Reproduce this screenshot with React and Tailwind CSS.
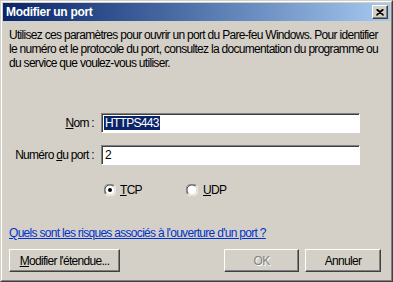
import React from 'react';

const font = { fontFamily: '"Liberation Sans", Arial, sans-serif' };

function Button({ children, disabled, className = '' }) {
  return (
    <div
      className={`h-[23px] flex items-center justify-center bg-[#d4d0c8] border border-t-white border-l-white border-r-[#404040] border-b-[#404040] shadow-[inset_-1px_-1px_0_#808080] ${
        disabled ? 'text-[#808080] [text-shadow:1px_1px_0_#fff]' : 'text-black'
      } ${className}`}
    >
      {children}
    </div>
  );
}

function Radio({ checked }) {
  return (
    <svg width="12" height="12" viewBox="0 0 12 12" className="shrink-0">
      <circle cx="6" cy="6" r="5.5" fill="#fff" />
      <path d="M1.6 10.4 A5.5 5.5 0 0 1 10.4 1.6" fill="none" stroke="#808080" strokeWidth="1" />
      <path d="M2.4 9.6 A4.4 4.4 0 0 1 9.6 2.4" fill="none" stroke="#404040" strokeWidth="1" />
      <path d="M10.4 1.6 A5.5 5.5 0 0 1 1.6 10.4" fill="none" stroke="#ffffff" strokeWidth="1" />
      <path d="M9.6 2.4 A4.4 4.4 0 0 1 2.4 9.6" fill="none" stroke="#d4d0c8" strokeWidth="1" />
      {checked && <circle cx="6" cy="6" r="2" fill="#000" />}
    </svg>
  );
}

export default function App() {
  return (
    <div style={font} className="w-[393px] h-[282px] bg-[#d4d0c8] border border-t-[#d4d0c8] border-l-[#d4d0c8] border-r-[#404040] border-b-[#404040]">
      <div className="h-full border border-t-white border-l-white border-r-[#808080] border-b-[#808080] p-px flex flex-col">
        {/* title bar */}
        <div className="h-[18px] flex items-center justify-between bg-gradient-to-r from-[#0a246a] to-[#a6caf0] pl-[3px] pr-[2px]">
          <span className="text-white font-bold text-[12px] tracking-[-0.3px]">Modifier un port</span>
          <div className="w-[16px] h-[14px] flex items-center justify-center bg-[#d4d0c8] border border-t-white border-l-white border-r-[#404040] border-b-[#404040] shadow-[inset_-1px_-1px_0_#808080]">
            <svg width="8" height="7" viewBox="0 0 8 7">
              <path d="M0.5 0.5 L7.5 6.5 M1.5 0.5 L7.5 6 M7.5 0.5 L0.5 6.5 M6.5 0.5 L0.5 6" stroke="#000" strokeWidth="1.2" fill="none" />
            </svg>
          </div>
        </div>

        {/* body */}
        <div className="flex flex-col px-[6px] text-[12px] tracking-[-0.7px] text-black">
          <p className="mt-[7px] leading-[14px] -mr-[4px]">
            Utilisez ces paramètres pour ouvrir un port du Pare-feu Windows. Pour identifier le numéro et le protocole du port, consultez la documentation du programme ou du service que voulez-vous utiliser.
          </p>

          <div className="mt-[43px] flex items-center">
            <label className="w-[86px] text-right pr-[1px]">
              <span className="underline">N</span>om :
            </label>
            <div className="ml-[6px] w-[259px] h-[20px] flex items-center bg-white border border-t-[#808080] border-l-[#808080] border-r-white border-b-white shadow-[inset_1px_1px_0_#404040] pl-[2px]">
              <span className="bg-[#0a246a] text-white leading-[14px] px-px">HTTPS443</span>
            </div>
          </div>

          <div className="mt-[12px] flex items-center">
            <label className="w-[86px] text-right pr-[1px]">
              Numéro <span className="underline">d</span>u port :
            </label>
            <div className="ml-[6px] w-[259px] h-[20px] flex items-center bg-white border border-t-[#808080] border-l-[#808080] border-r-white border-b-white shadow-[inset_1px_1px_0_#404040] pl-[3px]">
              2
            </div>
          </div>

          <div className="mt-[18px] h-[14px] flex items-center pl-[95px]">
            <div className="flex items-center gap-[4px] w-[82px]">
              <Radio checked />
              <span>
                <span className="underline">T</span>CP
              </span>
            </div>
            <div className="flex items-center gap-[5px]">
              <Radio />
              <span>
                <span className="underline">U</span>DP
              </span>
            </div>
          </div>

          <div className="mt-[29px] h-[14px] leading-[14px]">
            <span className="text-[#0033cc] underline">Quels sont les risques associés à l'ouverture d'un port ?</span>
          </div>

          <div className="mt-[9px] flex items-center justify-between pr-[3px]">
            <Button className="w-[111px]">
              <span>
                <span className="underline">M</span>odifier l'étendue...
              </span>
            </Button>
            <div className="flex gap-[6px]">
              <Button disabled className="w-[75px]">OK</Button>
              <Button className="w-[76px]">Annuler</Button>
            </div>
          </div>
        </div>
      </div>
    </div>
  );
}
